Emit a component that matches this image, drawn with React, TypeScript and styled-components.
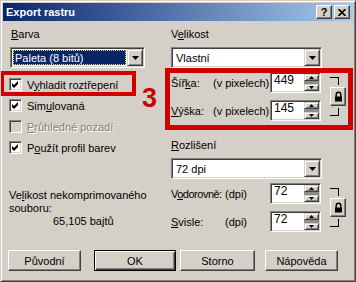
import React from 'react';
import styled, { createGlobalStyle } from 'styled-components';

const Global = createGlobalStyle`
  html, body { margin: 0; padding: 0; background: #d4d0c8; }
  body { font-family: "Liberation Sans", Arial, sans-serif; font-size: 11px; color: #000; }
`;

const Window = styled.div`
  position: relative;
  width: 356px;
  height: 282px;
  box-sizing: border-box;
  background: #d4d0c8;
  border: 1px solid;
  border-color: #d4d0c8 #404040 #404040 #d4d0c8;
  box-shadow: inset 1px 1px #fff, inset -1px -1px #808080;
  padding: 2px;
  display: flex;
  flex-direction: column;
  overflow: hidden;
`;

const TitleBar = styled.div`
  height: 18px;
  flex: none;
  display: flex;
  align-items: center;
  padding: 0 3px 0 3px;
  background: linear-gradient(to right, #0a246a, #a6caf0);
  color: #fff;
  font-weight: bold;
  font-size: 11px;
`;

const TitleText = styled.span`
  flex: 1;
`;

const TitleBtn = styled.div<{ $gap?: number }>`
  width: 16px;
  height: 14px;
  box-sizing: border-box;
  margin-left: ${(p) => p.$gap ?? 0}px;
  background: #d4d0c8;
  border: 1px solid;
  border-color: #fff #404040 #404040 #fff;
  box-shadow: inset -1px -1px #808080;
  display: flex;
  align-items: center;
  justify-content: center;
  color: #000;
  font: bold 11px "Liberation Sans", Arial, sans-serif;
  line-height: 1;
`;

const Body = styled.div`
  display: grid;
  grid-template-columns: 162px 182px;
  padding: 6px 0 0 6px;
  align-items: start;
`;

const Column = styled.div`
  display: flex;
  flex-direction: column;
`;

const Label = styled.div<{ $pad?: number; $mt?: number }>`
  height: 14px;
  line-height: 14px;
  padding-left: ${(p) => p.$pad ?? 0}px;
  margin-top: ${(p) => p.$mt ?? 0}px;
  white-space: nowrap;
`;

const Key = styled.span`
  text-decoration: underline;
`;

const Combo = styled.div<{ $w: number; $ml?: number }>`
  width: ${(p) => p.$w}px;
  height: 21px;
  margin-top: 6px;
  margin-left: ${(p) => p.$ml ?? 0}px;
  box-sizing: border-box;
  border: 1px solid;
  border-color: #808080 #fff #fff #808080;
  box-shadow: inset 1px 1px #404040, inset -1px -1px #d4d0c8;
  background: #fff;
  padding: 1px;
  display: flex;
`;

const ComboText = styled.div<{ $sel?: boolean }>`
  flex: 1;
  margin: 1px 1px 1px 1px;
  padding-left: 2px;
  display: flex;
  align-items: center;
  white-space: nowrap;
  background: ${(p) => (p.$sel ? '#0a246a' : 'transparent')};
  color: ${(p) => (p.$sel ? '#fff' : '#000')};
  outline: ${(p) => (p.$sel ? '1px dotted #d8d8a0' : 'none')};
  outline-offset: -1px;
`;

const Raised = styled.div`
  box-sizing: border-box;
  background: #d4d0c8;
  border: 1px solid;
  border-color: #d4d0c8 #404040 #404040 #d4d0c8;
  box-shadow: inset 1px 1px #fff, inset -1px -1px #808080;
  display: flex;
  align-items: center;
  justify-content: center;
`;

const ComboBtn = styled(Raised)`
  width: 16px;
  height: 17px;
  flex: none;
`;

const CheckRow = styled.div<{ $mt?: number; $disabled?: boolean }>`
  height: 21px;
  margin-top: ${(p) => p.$mt ?? 0}px;
  display: flex;
  align-items: center;
  gap: 5px;
  white-space: nowrap;
  color: ${(p) => (p.$disabled ? '#808080' : '#000')};
  text-shadow: ${(p) => (p.$disabled ? '1px 1px #fff' : 'none')};
`;

const Box = styled.div<{ $disabled?: boolean }>`
  width: 13px;
  height: 13px;
  flex: none;
  box-sizing: border-box;
  border: 1px solid;
  border-color: #808080 #fff #fff #808080;
  box-shadow: inset 1px 1px #404040, inset -1px -1px #d4d0c8;
  background: ${(p) => (p.$disabled ? '#d4d0c8' : '#fff')};
  display: flex;
  align-items: center;
  justify-content: center;
`;

const Info = styled.div<{ $mt?: number; $pad?: number }>`
  line-height: 13px;
  margin-top: ${(p) => p.$mt ?? 0}px;
  padding-left: ${(p) => p.$pad ?? 0}px;
  white-space: nowrap;
`;

const FieldGrid = styled.div<{ $labelW: number; $unitW: number }>`
  display: grid;
  grid-template-columns: ${(p) => p.$labelW}px ${(p) => p.$unitW}px 51px 9px 16px;
  grid-template-rows: 21px 21px;
  row-gap: 7px;
  align-items: center;
  margin-top: 4px;
  white-space: nowrap;
`;

const Spin = styled.div<{ $row: number }>`
  grid-column: 3;
  grid-row: ${(p) => p.$row};
  height: 21px;
  box-sizing: border-box;
  border: 1px solid;
  border-color: #808080 #fff #fff #808080;
  box-shadow: inset 1px 1px #404040, inset -1px -1px #d4d0c8;
  background: #fff;
  padding: 1px;
  display: flex;
`;

const SpinValue = styled.div`
  flex: 1;
  padding: 0 0 0 2px;
  line-height: 13px;
  font-size: 12px;
`;

const SpinBtns = styled.div`
  width: 15px;
  display: flex;
  flex-direction: column;
  background: #8c8c8c;
  justify-content: space-between;
`;

const SpinBtn = styled(Raised)`
  height: 7px;
`;

const Cell = styled.div<{ $col: number; $row: number; $tight?: boolean }>`
  grid-column: ${(p) => p.$col};
  grid-row: ${(p) => p.$row};
  letter-spacing: ${(p) => (p.$tight ? '-0.5px' : 'normal')};
`;

const LockCol = styled.div`
  grid-column: 5;
  grid-row: 1 / span 2;
  align-self: stretch;
  display: flex;
  flex-direction: column;
  justify-content: center;
  align-items: flex-start;
  gap: 2px;
`;

const Bracket = styled.div<{ $top?: boolean }>`
  width: 9px;
  height: 8px;
  box-sizing: border-box;
  border-right: 1px solid #000;
  ${(p) => (p.$top ? 'border-top: 1px solid #000;' : 'border-bottom: 1px solid #000;')}
`;

const LockBtn = styled.div`
  width: 16px;
  height: 19px;
  box-sizing: border-box;
  background: #d4d0c8;
  border: 1px solid;
  border-color: #fff #404040 #404040 #fff;
  box-shadow: inset -1px -1px #808080;
  display: flex;
  align-items: center;
  justify-content: center;
`;

const Footer = styled.div`
  display: flex;
  margin-top: 18px;
  padding-left: 5px;
`;

const Button = styled.div<{ $w: number; $ml?: number; $default?: boolean }>`
  width: ${(p) => p.$w}px;
  height: 21px;
  margin-left: ${(p) => p.$ml ?? 0}px;
  box-sizing: border-box;
  background: #d4d0c8;
  border: 1px solid;
  border-color: ${(p) => (p.$default ? '#000' : '#fff #404040 #404040 #fff')};
  box-shadow: ${(p) =>
    p.$default
      ? 'inset 1px 1px #fff, inset -1px -1px #404040, inset -2px -2px #808080'
      : 'inset -1px -1px #808080'};
  display: flex;
  align-items: center;
  justify-content: center;
  white-space: nowrap;
`;

const RedBox = styled.div<{ $x: number; $y: number; $w: number; $h: number; $b: number }>`
  position: absolute;
  left: ${(p) => p.$x - 1}px;
  top: ${(p) => p.$y - 1}px;
  width: ${(p) => p.$w}px;
  height: ${(p) => p.$h}px;
  box-sizing: border-box;
  border: ${(p) => p.$b}px solid #d00000;
  pointer-events: none;
`;

const Marker = styled.div`
  position: absolute;
  left: 141px;
  top: 84px;
  font: bold 27px/27px "Liberation Sans", Arial, sans-serif;
  color: #d00000;
`;

const Arrow = ({ w = 7, h = 4, up = false }: { w?: number; h?: number; up?: boolean }) => (
  <svg width={w} height={h} viewBox={`0 0 ${w} ${h}`}>
    <polygon points={up ? `${w / 2},0 ${w},${h} 0,${h}` : `0,0 ${w},0 ${w / 2},${h}`} fill="#000" />
  </svg>
);

const Check = () => (
  <svg width="7" height="7" viewBox="0 0 7 7">
    <polygon points="0,2 2,4 6,0 6,3 2,7 0,5" fill="#000" />
  </svg>
);

const Lock = () => (
  <svg width="9" height="11" viewBox="0 0 9 11">
    <path d="M2.2,6 V3.5 a2.3,2.3 0 0 1 4.6,0 V6" fill="none" stroke="#000" strokeWidth="1.4" />
    <rect x="1" y="5.5" width="7" height="5" fill="#000" />
  </svg>
);

const SpinBox = ({ row, value }: { row: number; value: string }) => (
  <Spin $row={row}>
    <SpinValue>{value}</SpinValue>
    <SpinBtns>
      <SpinBtn>
        <Arrow w={5} h={3} up />
      </SpinBtn>
      <SpinBtn>
        <Arrow w={5} h={3} />
      </SpinBtn>
    </SpinBtns>
  </Spin>
);

const LockGroup = () => (
  <LockCol>
    <Bracket $top />
    <LockBtn>
      <Lock />
    </LockBtn>
    <Bracket />
  </LockCol>
);

export default function App() {
  return (
    <>
      <Global />
      <Window>
        <TitleBar>
          <TitleText>Export rastru</TitleText>
          <TitleBtn>?</TitleBtn>
          <TitleBtn $gap={2}>
            <svg width="8" height="7" viewBox="0 0 8 7">
              <path d="M0.5,0 L7.5,7 M7.5,0 L0.5,7" stroke="#000" strokeWidth="1.6" />
            </svg>
          </TitleBtn>
        </TitleBar>
        <Body>
          <Column>
            <Label $pad={2}>
              <Key>B</Key>arva
            </Label>
            <Combo $w={135} $ml={1}>
              <ComboText $sel>Paleta (8 bitů)</ComboText>
              <ComboBtn>
                <Arrow />
              </ComboBtn>
            </Combo>
            <CheckRow $mt={6}>
              <Box>
                <Check />
              </Box>
              <span>
                V<Key>y</Key>hladit roztřepení
              </span>
            </CheckRow>
            <CheckRow>
              <Box>
                <Check />
              </Box>
              <span>
                Sim<Key>u</Key>lovaná
              </span>
            </CheckRow>
            <CheckRow $disabled>
              <Box $disabled />
              <span>
                <Key>P</Key>růhledné pozadí
              </span>
            </CheckRow>
            <CheckRow>
              <Box>
                <Check />
              </Box>
              <span>
                P<Key>o</Key>užít profil barev
              </span>
            </CheckRow>
            <Info $mt={31}>
              Ve<Key>l</Key>ikost nekomprimovaného
            </Info>
            <Info>souboru:</Info>
            <Info $pad={44}>65,105 bajtů</Info>
          </Column>
          <Column>
            <Label>
              V<Key>e</Key>likost
            </Label>
            <Combo $w={151}>
              <ComboText>Vlastní</ComboText>
              <ComboBtn>
                <Arrow />
              </ComboBtn>
            </Combo>
            <FieldGrid $labelW={42} $unitW={57}>
              <Cell $col={1} $row={1}>
                Šíř<Key>k</Key>a:
              </Cell>
              <Cell $col={2} $row={1}>(v pixelech)</Cell>
              <SpinBox row={1} value="449" />
              <Cell $col={1} $row={2}>
                <Key>V</Key>ýška:
              </Cell>
              <Cell $col={2} $row={2}>(v pixelech)</Cell>
              <SpinBox row={2} value="145" />
              <LockGroup />
            </FieldGrid>
            <Label $mt={17}>
              <Key>R</Key>ozlišení
            </Label>
            <Combo $w={151}>
              <ComboText>72 dpi</ComboText>
              <ComboBtn>
                <Arrow />
              </ComboBtn>
            </Combo>
            <FieldGrid $labelW={54} $unitW={45}>
              <Cell $col={1} $row={1} $tight>
                V<Key>o</Key>dorovně:
              </Cell>
              <Cell $col={2} $row={1}>(dpi)</Cell>
              <SpinBox row={1} value="72" />
              <Cell $col={1} $row={2}>
                <Key>S</Key>visle:
              </Cell>
              <Cell $col={2} $row={2}>(dpi)</Cell>
              <SpinBox row={2} value="72" />
              <LockGroup />
            </FieldGrid>
          </Column>
        </Body>
        <Footer>
          <Button $w={73}>Původní</Button>
          <Button $w={82} $ml={13} $default>
            OK
          </Button>
          <Button $w={75} $ml={4}>
            Storno
          </Button>
          <Button $w={73} $ml={10}>
            Nápověda
          </Button>
        </Footer>
        <RedBox $x={0} $y={71} $w={136} $h={25} $b={4} />
        <RedBox $x={165} $y={68} $w={188} $h={62} $b={5} />
        <Marker>3</Marker>
      </Window>
    </>
  );
}
